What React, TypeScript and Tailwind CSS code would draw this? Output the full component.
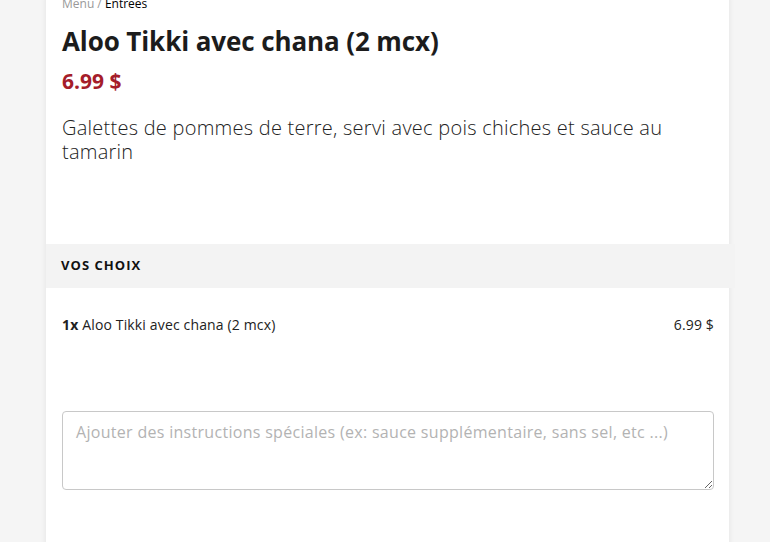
export default function App() {
  return (
    <div className="min-h-[542px] bg-[#f5f5f5] pl-[46px] pr-[41px] font-['Open_Sans',sans-serif] text-[#222]">
      <div className="relative min-h-[560px] bg-white pb-10 shadow-[0_0_6px_rgba(0,0,0,0.08)]">
        <div className="pl-4 pr-[15px]">
          <div className="-mt-[4px] text-[12px] leading-[16px] text-[#999]">
            Menu / <span className="text-black">Entrees</span>
          </div>
          <h1 className="mt-[14px] text-[26px] font-bold leading-[30px] tracking-[-0.1px] text-[#1c1c1c]">
            Aloo Tikki avec chana (2 mcx)
          </h1>
          <div className="mt-[11px] text-[21px] font-bold leading-[28px] text-[#a51d2a]">6.99 $</div>
          <p className="mt-[21px] text-[20px] font-light leading-[24px] tracking-[0.25px] text-[#222]">
            Galettes de pommes de terre, servi avec pois chiches et sauce au tamarin
          </p>
        </div>

        <div className="mr-[-6px] mt-[80px] flex h-[44px] items-center bg-[#f3f3f3] px-[15px]">
          <span className="text-[13px] font-bold uppercase tracking-[0.08em] text-[#111]">Vos choix</span>
        </div>

        <div className="pl-4 pr-[15px]">
          <div className="mt-[28px] flex items-center justify-between text-[14px] leading-[18px] tracking-[0.15px]">
            <div>
              <span className="font-bold">1x</span> Aloo Tikki avec chana (2 mcx)
            </div>
            <div>6.99 $</div>
          </div>

          <textarea
            className="mt-[77px] block h-[79px] w-full rounded-[4px] border border-[#c8c8c8] px-[13px] py-[9px] text-[16px] leading-[22px] tracking-[0.3px] outline-none placeholder:text-[#b3b3b3]"
            placeholder="Ajouter des instructions spéciales (ex: sauce supplémentaire, sans sel, etc ...)"
          />
        </div>
      </div>
    </div>
  )
}
